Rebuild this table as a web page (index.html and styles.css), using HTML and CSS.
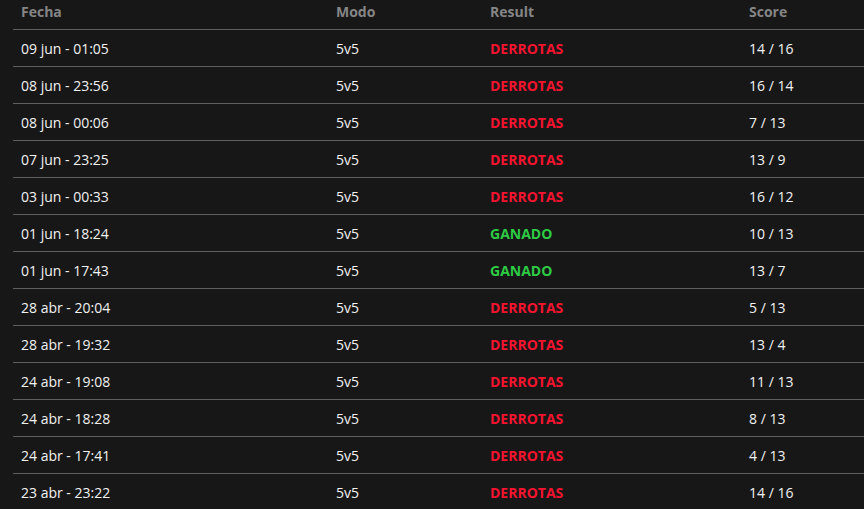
FILE: index.html
```html
<!DOCTYPE html>
<html lang="es">
<head>
    <meta charset="UTF-8">
    <meta name="viewport" content="width=device-width, initial-scale=1.0">
    <title>Historial</title>
    <link rel="stylesheet" href="styles.css">
</head>
<body>
    <table class="matches">
        <thead>
            <tr>
                <th>Fecha</th>
                <th>Modo</th>
                <th>Result</th>
                <th>Score</th>
            </tr>
        </thead>
        <tbody>
            <tr><td>09 jun - 01:05</td><td>5v5</td><td class="loss">DERROTAS</td><td>14 / 16</td></tr>
            <tr><td>08 jun - 23:56</td><td>5v5</td><td class="loss">DERROTAS</td><td>16 / 14</td></tr>
            <tr><td>08 jun - 00:06</td><td>5v5</td><td class="loss">DERROTAS</td><td>7 / 13</td></tr>
            <tr><td>07 jun - 23:25</td><td>5v5</td><td class="loss">DERROTAS</td><td>13 / 9</td></tr>
            <tr><td>03 jun - 00:33</td><td>5v5</td><td class="loss">DERROTAS</td><td>16 / 12</td></tr>
            <tr><td>01 jun - 18:24</td><td>5v5</td><td class="win">GANADO</td><td>10 / 13</td></tr>
            <tr><td>01 jun - 17:43</td><td>5v5</td><td class="win">GANADO</td><td>13 / 7</td></tr>
            <tr><td>28 abr - 20:04</td><td>5v5</td><td class="loss">DERROTAS</td><td>5 / 13</td></tr>
            <tr><td>28 abr - 19:32</td><td>5v5</td><td class="loss">DERROTAS</td><td>13 / 4</td></tr>
            <tr><td>24 abr - 19:08</td><td>5v5</td><td class="loss">DERROTAS</td><td>11 / 13</td></tr>
            <tr><td>24 abr - 18:28</td><td>5v5</td><td class="loss">DERROTAS</td><td>8 / 13</td></tr>
            <tr><td>24 abr - 17:41</td><td>5v5</td><td class="loss">DERROTAS</td><td>4 / 13</td></tr>
            <tr><td>23 abr - 23:22</td><td>5v5</td><td class="loss">DERROTAS</td><td>14 / 16</td></tr>
        </tbody>
    </table>
</body>
</html>
```

FILE: styles.css
```css
body {
    margin: 0;
    background: #171717;
    color: #f2f2f2;
    font-family: 'Open Sans', sans-serif;
    overflow: hidden;
}

.matches {
    margin-left: 13px;
    width: 851px;
    border-collapse: collapse;
    table-layout: fixed;
}

.matches th,
.matches td {
    padding: 0 0 0 8px;
    text-align: left;
    white-space: nowrap;
}

.matches th:nth-child(1) { width: 307px; }
.matches th:nth-child(2) { width: 146px; }
.matches th:nth-child(3) { width: 251px; }

.matches th {
    height: 29px;
    color: #858585;
    font-size: 14px;
    font-weight: 700;
    vertical-align: top;
    line-height: 23px;
    border-bottom: 1px solid #5e5e5e;
}

.matches td {
    height: 35px;
    font-size: 14px;
    font-weight: 500;
    line-height: 19px;
    padding-top: 1px;
    border-bottom: 1px solid #5e5e5e;
}

.loss {
    color: #f5132f;
    font-weight: 700 !important;
}

.win {
    color: #2ecb45;
    font-weight: 700 !important;
}
```
